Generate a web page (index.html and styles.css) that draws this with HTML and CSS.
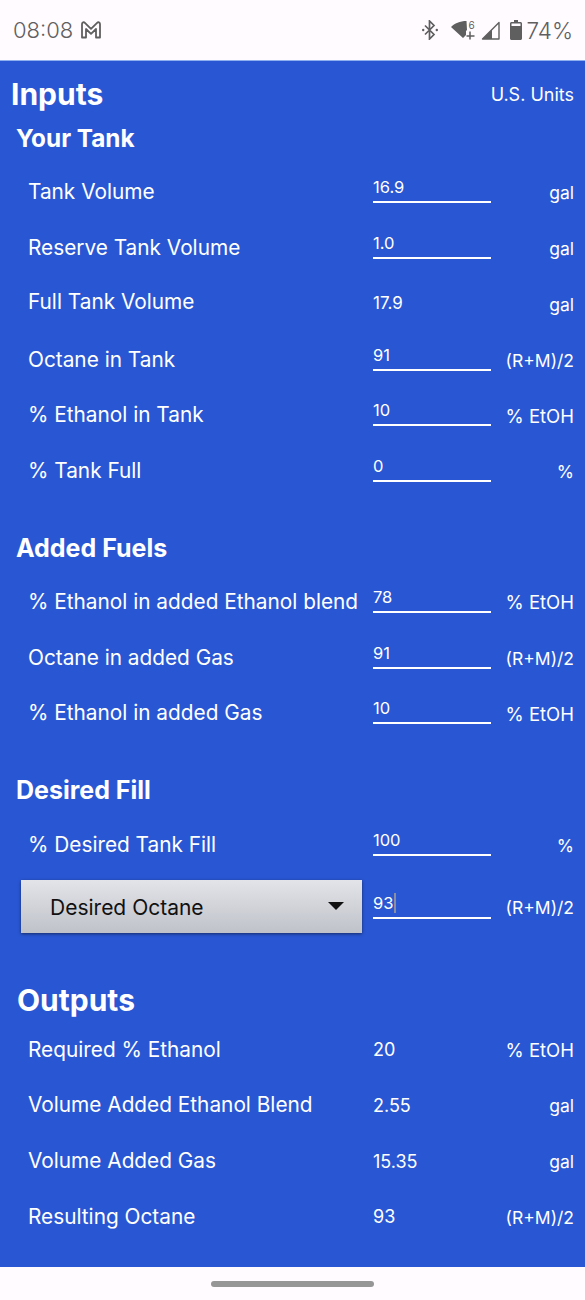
FILE: index.html
```html
<!DOCTYPE html>
<html lang="en">
<head>
    <meta charset="UTF-8">
    <meta name="viewport" content="width=device-width, initial-scale=1.0">
    <title>Ethanol Blend Calculator</title>
    <link rel="stylesheet" href="styles.css">
</head>
<body>
    <div class="status">
        <div class="status-left">
            <span>08:08</span>
            <svg viewBox="0 0 20 18" width="20" height="18"><path d="M1 16.500V3c0-1.600 1.800-2.300 2.900-1.200L10 7.800l6.100-6C17.200.7 19 1.400 19 3v13.500h-4V8L10 12.800 5 8v8.500z" fill="none" stroke="#5f5f5f" stroke-width="1.800" stroke-linejoin="round"/></svg>
        </div>
        <div class="status-right">
            <svg viewBox="0 0 16 20" width="16" height="20"><path d="M3 5.500l9 9-4.500 4.500V1L12 5.500l-9 9" fill="none" stroke="#5f5f5f" stroke-width="1.700"/><circle cx="1.200" cy="10" r="1.200" fill="#5f5f5f"/><circle cx="14.800" cy="10" r="1.200" fill="#5f5f5f"/></svg>
            <svg class="icon-wifi" viewBox="0 0 24 22" width="24" height="22"><path d="M0 8C3.500 4.500 9 2 15.500 2l.5 9-1 1v4l-3 3z" fill="#5f5f5f"/><text x="17.500" y="9.500" class="wifi-text">6</text><path d="M19 12.500v8M15.500 17h8" fill="none" stroke="#5f5f5f" stroke-width="1.500"/></svg>
            <svg class="icon-signal" viewBox="0 0 19 19" width="19" height="19"><path d="M18 1.500V18H1.500z" fill="none" stroke="#5f5f5f" stroke-width="1.400" stroke-linejoin="round"/><path d="M11 8.500V18H1.500z" fill="#5f5f5f"/></svg>
            <svg class="icon-battery" viewBox="0 0 12 20" width="12" height="20"><path d="M4 0h4v2h2.500c.8 0 1.500.7 1.500 1.500V18.500c0 .8-.7 1.500-1.500 1.500h-9C.7 20 0 19.300 0 18.500V3.500C0 2.700.7 2 1.500 2H4z" fill="#5f5f5f"/><rect x="1.500" y="3.500" width="9" height="2.500" fill="#fffbff"/></svg>
            <span>74%</span>
        </div>
    </div>

    <div class="main">
        <div class="title-row">
            <h1>Inputs</h1>
            <span class="units-switch">U.S. Units</span>
        </div>

        <h2 class="first">Your Tank</h2>
        <div class="row"><div class="label">Tank Volume</div><div class="field">16.9</div><div class="unit">gal</div></div>
        <div class="row"><div class="label">Reserve Tank Volume</div><div class="field">1.0</div><div class="unit">gal</div></div>
        <div class="row"><div class="label up">Full Tank Volume</div><div class="value">17.9</div><div class="unit">gal</div></div>
        <div class="row"><div class="label">Octane in Tank</div><div class="field">91</div><div class="unit">(R+M)/2</div></div>
        <div class="row"><div class="label">% Ethanol in Tank</div><div class="field">10</div><div class="unit etoh">% EtOH</div></div>
        <div class="row"><div class="label">% Tank Full</div><div class="field">0</div><div class="unit">%</div></div>

        <h2>Added Fuels</h2>
        <div class="row"><div class="label">% Ethanol in added Ethanol blend</div><div class="field">78</div><div class="unit etoh">% EtOH</div></div>
        <div class="row"><div class="label">Octane in added Gas</div><div class="field">91</div><div class="unit">(R+M)/2</div></div>
        <div class="row"><div class="label">% Ethanol in added Gas</div><div class="field">10</div><div class="unit etoh">% EtOH</div></div>

        <h2 class="desired">Desired Fill</h2>
        <div class="row"><div class="label">% Desired Tank Fill</div><div class="field">100</div><div class="unit">%</div></div>
        <div class="row row-select">
            <div class="select"><span>Desired Octane</span><span class="arrow"></span></div>
            <div class="field"><span class="caret">93</span></div>
            <div class="unit">(R+M)/2</div>
        </div>

        <h1 class="outputs">Outputs</h1>
        <div class="row"><div class="label">Required % Ethanol</div><div class="value big">20</div><div class="unit etoh">% EtOH</div></div>
        <div class="row"><div class="label">Volume Added Ethanol Blend</div><div class="value big">2.55</div><div class="unit">gal</div></div>
        <div class="row"><div class="label">Volume Added Gas</div><div class="value big">15.35</div><div class="unit">gal</div></div>
        <div class="row"><div class="label">Resulting Octane</div><div class="value big">93</div><div class="unit">(R+M)/2</div></div>
    </div>

    <div class="nav"><div class="nav-pill"></div></div>
</body>
</html>
```

FILE: styles.css
```css
* {
    box-sizing: border-box;
}
body {
    font-family: Inter, "Noto Sans", sans-serif;
    margin: 0;
    height: 1300px;
    overflow: hidden;
    display: flex;
    flex-direction: column;
    background-color: #fffbff;
}
.status {
    height: 60px;
    display: flex;
    justify-content: space-between;
    align-items: center;
    padding: 0 12px 0 13px;
    color: #5f5f5f;
    font-size: 22px;
    font-weight: 300;
}
.status-left {
    display: flex;
    align-items: center;
    gap: 8px;
}
.status-right {
    display: flex;
    align-items: center;
}
.status-right span {
    margin-left: 4px;
    font-size: 22.500px;
}
.icon-wifi {
    margin-left: 13px;
}
.icon-signal {
    margin-left: 6px;
}
.icon-battery {
    margin-left: 10px;
}
.wifi-text {
    font-size: 10px;
    font-weight: 400;
    fill: #5f5f5f;
}
.main {
    height: 1207px;
    background-color: #2957d3;
    border-top: 1px solid #8fb0ee;
    color: #fff;
    padding: 0 11px 0 0;
}
.title-row {
    height: 59px;
    display: flex;
    justify-content: space-between;
    align-items: center;
    padding: 6px 0 0 11px;
}
.units-switch {
    margin-top: 2px;
    font-size: 18px;
}
h1 {
    margin: 0;
    font-size: 30px;
    font-weight: 700;
}
h2 {
    margin: 31px 0 8px 16px;
    height: 36px;
    line-height: 36px;
    font-size: 25px;
    font-weight: 700;
}
h2.first {
    margin: 0 0 0 16px;
    height: 44px;
    font-size: 24.300px;
}
h2.desired {
    margin-bottom: 9px;
}
.outputs {
    margin: 48px 0 3px 17px;
    height: 36px;
    line-height: 36px;
}
.row {
    height: 55.75px;
    display: grid;
    grid-template-columns: 345px 118px 1fr;
    align-items: center;
    padding-left: 28px;
}
.label {
    font-size: 20.800px;
    white-space: nowrap;
}
.label.up {
    margin-top: -4px;
}
.field {
    height: 28px;
    margin-top: -5px;
    border-bottom: 2px solid #fff;
    font-size: 16.500px;
    line-height: 24px;
}
.value {
    font-size: 17px;
}
.value.big {
    font-size: 18px;
    padding-top: 1px;
}
.unit {
    text-align: right;
    font-size: 17.500px;
    padding-top: 2px;
}
.unit.etoh {
    font-size: 18.500px;
}
.caret {
    border-right: 2px solid #8a8fa0;
    padding-right: 1px;
}
.row-select {
    margin-top: 6px;
    padding-left: 21px;
    grid-template-columns: 352px 118px 1fr;
}
.row-select .field {
    margin-top: -3px;
}
.select {
    width: 341px;
    height: 53px;
    display: flex;
    justify-content: space-between;
    align-items: center;
    padding: 3px 18px 0 29px;
    background: linear-gradient(#e3e4e9, #bfc2c9);
    box-shadow: 0 1px 3px rgba(0, 0, 0, 0.5);
    color: #111;
    font-size: 21px;
}
.arrow {
    width: 0;
    height: 0;
    margin-top: -3px;
    border-left: 8px solid transparent;
    border-right: 8px solid transparent;
    border-top: 8px solid #111;
}
.nav {
    flex: 1;
    display: flex;
    justify-content: center;
    padding-top: 14px;
}
.nav-pill {
    width: 163px;
    height: 6px;
    border-radius: 3px;
    background-color: #969696;
}
```
